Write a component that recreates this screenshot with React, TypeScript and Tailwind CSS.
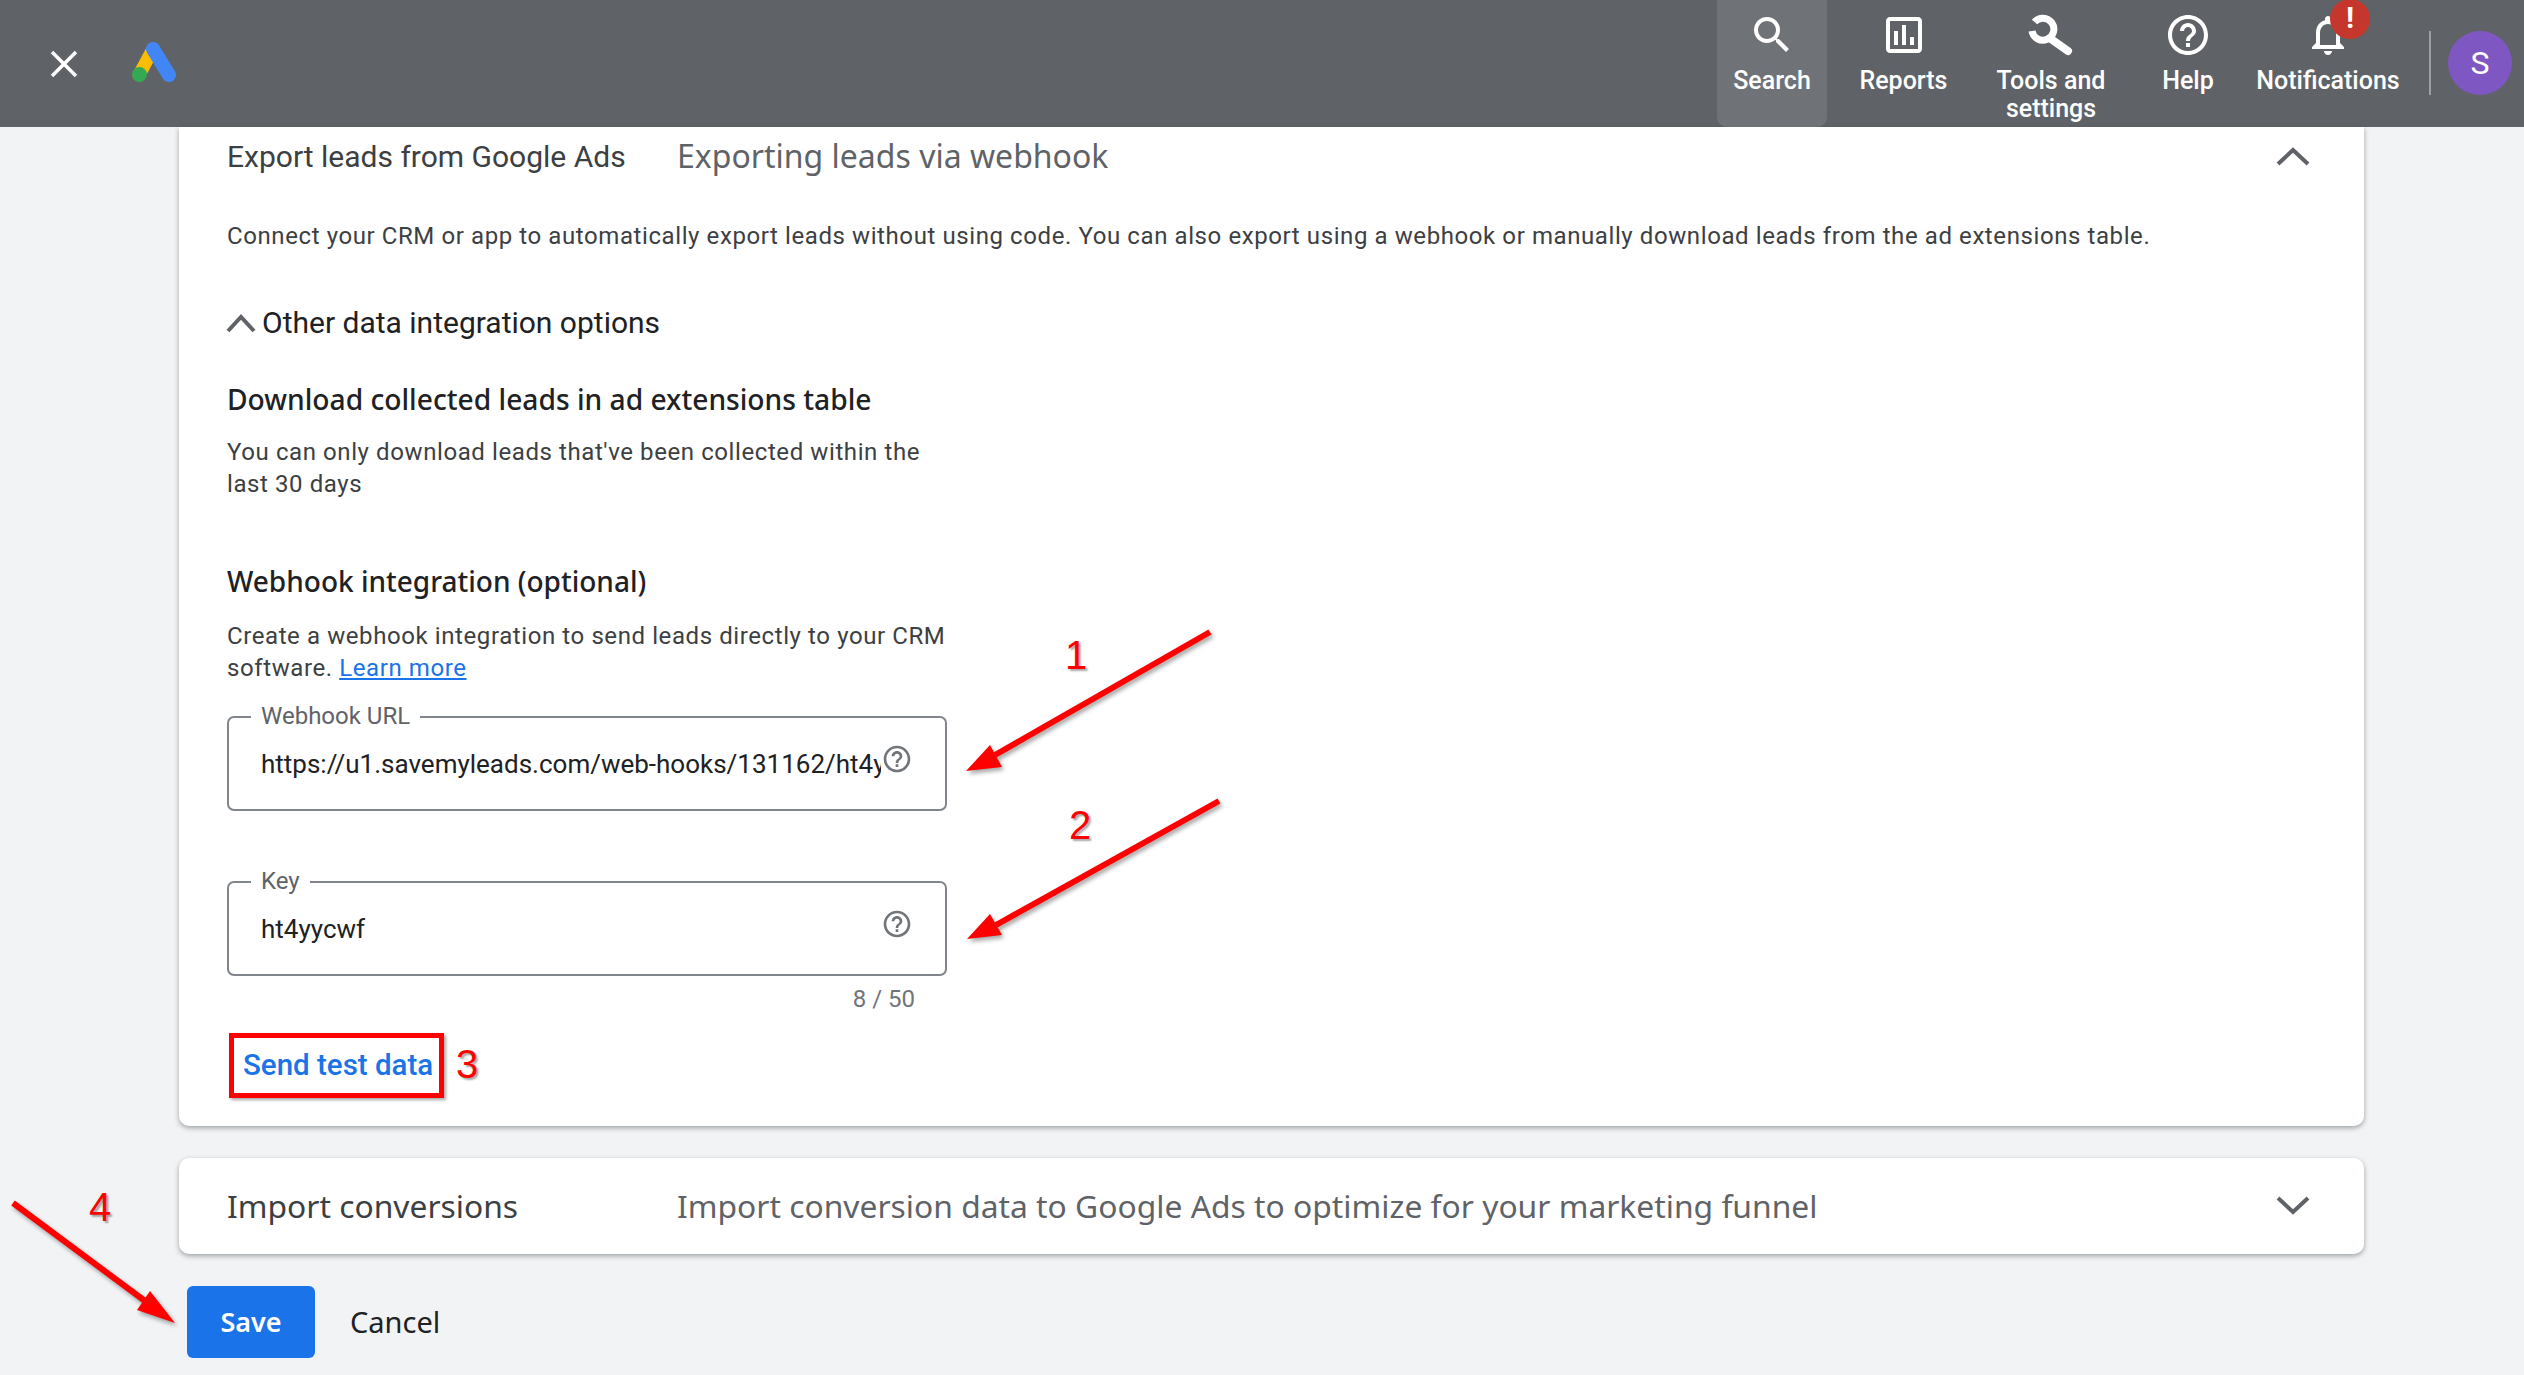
const ROBOTO = "font-[Roboto,sans-serif]";

function Ic({ d, cls }: { d: string; cls: string }) {
  return (
    <svg viewBox="0 0 24 24" className={cls} fill="currentColor">
      <path d={d} />
    </svg>
  );
}

const SEARCH = "M15.5 14h-.79l-.28-.27C15.41 12.59 16 11.11 16 9.5 16 5.91 13.09 3 9.5 3S3 5.91 3 9.5 5.91 16 9.5 16c1.61 0 3.09-.59 4.23-1.57l.27.28v.79l5 4.99L20.49 19l-4.99-5zm-6 0C7.01 14 5 11.99 5 9.5S7.01 5 9.5 5 14 7.01 14 9.5 11.99 14 9.5 14z";
const REPORT = "M19 3H5c-1.1 0-2 .9-2 2v14c0 1.1.9 2 2 2h14c1.1 0 2-.9 2-2V5c0-1.1-.9-2-2-2zm0 16H5V5h14v14zM7 10h2v7H7zm4-3h2v10h-2zm4 6h2v4h-2z";
const HELP = "M11 18h2v-2h-2v2zm1-16C6.48 2 2 6.48 2 12s4.48 10 10 10 10-4.48 10-10S17.52 2 12 2zm0 18c-4.41 0-8-3.59-8-8s3.59-8 8-8 8 3.59 8 8-3.59 8-8 8zm0-14c-2.21 0-4 1.79-4 4h2c0-1.1.9-2 2-2s2 .9 2 2c0 2-3 1.75-3 5h2c0-2.25 3-2.5 3-5 0-2.21-1.79-4-4-4z";
const BELL = "M12 22c1.1 0 2-.9 2-2h-4c0 1.1.9 2 2 2zm6-6v-5c0-3.07-1.63-5.64-4.5-6.32V4c0-.83-.67-1.5-1.5-1.5s-1.5.67-1.5 1.5v.68C7.64 5.36 6 7.92 6 11v5l-2 2v1h16v-1l-2-2zm-2 1H8v-6c0-2.48 1.51-4.5 4-4.5s4 2.02 4 4.5v6z";

function NavItem({ icon, label, w, active, children }: { icon: React.ReactNode; label: React.ReactNode; w: string; active?: boolean; children?: React.ReactNode }) {
  return (
    <div className={`relative flex flex-col items-center h-[127px] pt-[11px] rounded-b-[10px] ${w} ${active ? "bg-[#6f7378]" : ""}`}>
      {icon}
      <div className="text-white text-[25px] leading-[28px] font-medium text-center mt-[8px] whitespace-nowrap">{label}</div>
      {children}
    </div>
  );
}

function Field({ label, value }: { label: string; value: string }) {
  return (
    <div className="relative w-[720px] h-[95px] border-2 border-[#80868b] rounded-[7px] pl-[32px] pt-[30px]">
      <div className="absolute -top-[15px] left-[22px] bg-white px-[10px] text-[24px] leading-[26px] text-[#5f6368]">{label}</div>
      <div className="overflow-hidden whitespace-nowrap w-[620px] text-[26px] leading-[32px] text-[#202124]">{value}</div>
      <Ic d={HELP} cls="absolute right-[32px] top-[25px] w-[32px] h-[32px] text-[#70757a]" />
    </div>
  );
}

const Num = ({ n, cls }: { n: string; cls: string }) => (
  <div className={`absolute text-[40px] leading-[40px] text-[#ff0000] font-['Liberation_Sans',sans-serif] [text-shadow:2px_2px_2px_rgba(0,0,0,0.35)] ${cls}`}>{n}</div>
);

const BODY = "text-[24px] leading-[32px] tracking-[0.59px] text-[#3c4043]";
const GSANS = "font-['Noto_Sans',sans-serif]";

export default function App() {
  return (
    <div className={`relative w-[2524px] h-[1375px] overflow-hidden bg-[#f1f3f4] ${ROBOTO}`}>
      <header className="flex items-start h-[127px] bg-[#5f6368]">
        <div className="flex items-center h-[127px] pl-[48px]">
          <svg viewBox="0 0 24 24" className="w-[32px] h-[32px]" fill="none" stroke="#fff" strokeWidth="2.6">
            <path d="M3 3l18 18M21 3L3 21" />
          </svg>
          <svg viewBox="0 0 44 40" className="w-[44px] h-[40px] ml-[52px] -mt-[3px]">
            <path d="M21 7 L7 33" stroke="#fbbc04" strokeWidth="13" strokeLinecap="round" fill="none" />
            <path d="M21 7 L37 33" stroke="#4285f4" strokeWidth="14" strokeLinecap="round" fill="none" />
            <circle cx="7.5" cy="32.5" r="7.5" fill="#34a853" />
          </svg>
        </div>
        <div className="ml-auto flex items-start">
          <NavItem icon={<Ic d={SEARCH} cls="w-[48px] h-[48px] text-white" />} label="Search" w="w-[110px]" active />
          <NavItem icon={<Ic d={REPORT} cls="w-[48px] h-[48px] text-white" />} label="Reports" w="w-[143px] ml-[5px]" />
          <NavItem
            icon={
              <svg viewBox="2027 11 48 48" className="w-[48px] h-[48px]" fill="none" stroke="#fff">
                <path d="M2034.5 22A11 11 0 1 1 2032 31" strokeWidth="7" />
                <path d="M2051 39L2068 51" strokeWidth="8" strokeLinecap="round" />
              </svg>
            }
            label={<>Tools and<br />settings</>}
            w="w-[152px]"
          />
          <NavItem icon={<Ic d={HELP} cls="w-[48px] h-[48px] text-white" />} label="Help" w="w-[122px]" />
          <NavItem icon={<Ic d={BELL} cls="w-[48px] h-[48px] text-white" />} label="Notifications" w="w-[158px]">
            <div className="absolute left-[81px] -top-[1px] w-[40px] h-[40px] rounded-full bg-[#c5372c] text-white text-[30px] leading-[38px] text-center font-bold">!</div>
          </NavItem>
          <div className="w-[2px] h-[64px] bg-[#9aa0a6] mt-[31px] ml-[22px]" />
          <div className="w-[64px] h-[64px] rounded-full bg-[#7e57c2] text-white text-[32px] leading-[64px] text-center mt-[31px] ml-[17px] mr-[12px]">S</div>
        </div>
      </header>

      <main className="ml-[179px] w-[2185px]">
        <section className="h-[999px] bg-white rounded-b-[10px] shadow-[0_2px_5px_rgba(60,64,67,0.45)] px-[48px]">
          <div className="flex items-center justify-between h-[58px]">
            <div className="flex items-center">
              <div className="w-[398px] shrink-0 text-[30px] text-[#3c4043] whitespace-nowrap">Export leads from Google Ads</div>
              <div className={`ml-[52px] text-[32px] text-[#5f6368] ${GSANS} whitespace-nowrap`}>Exporting leads via webhook</div>
            </div>
            <svg viewBox="0 0 34 20" className="w-[34px] h-[20px] mr-[6px]" fill="none" stroke="#5f6368" strokeWidth="4"><path d="M2 18L17 4l15 14" /></svg>
          </div>
          <p className={`mt-[35px] ${BODY} whitespace-nowrap`}>Connect your CRM or app to automatically export leads without using code. You can also export using a webhook or manually download leads from the ad extensions table.</p>
          <div className="flex items-center mt-[51px]">
            <svg viewBox="0 0 30 20" className="w-[30px] h-[20px] -ml-[1px]" fill="none" stroke="#5f6368" strokeWidth="4"><path d="M2 18L15 4l13 14" /></svg>
            <span className="ml-[6px] text-[30px] leading-[40px] text-[#202124]">Other data integration options</span>
          </div>
          <h3 className={`mt-[36px] text-[28.2px] leading-[40px] font-medium text-[#202124] ${GSANS}`}>Download collected leads in ad extensions table</h3>
          <p className={`mt-[17px] w-[722px] ${BODY}`}>You can only download leads that've been collected within the last 30 days</p>
          <h3 className={`mt-[61px] text-[28px] leading-[40px] font-medium text-[#202124] ${GSANS}`}>Webhook integration (optional)</h3>
          <p className={`mt-[19px] w-[722px] ${BODY}`}>Create a webhook integration to send leads directly to your CRM software. <a className="text-[#1a73e8] underline">Learn more</a></p>
          <div className="mt-[32px]">
            <Field label="Webhook URL" value="https://u1.savemyleads.com/web-hooks/131162/ht4yycwf" />
          </div>
          <div className="mt-[70px]">
            <Field label="Key" value="ht4yycwf" />
          </div>
          <div className="w-[688px] mt-[10px] text-right text-[24px] leading-[26px] text-[#70757a]">8 / 50</div>
          <div className="relative mt-[21px] ml-[2px] w-[215px] h-[65px] border-[5px] border-[#ff0000] shadow-[2px_2px_3px_rgba(0,0,0,0.35)] flex items-center pl-[9px]">
            <span className="text-[29.5px] font-medium text-[#1a73e8] whitespace-nowrap">Send test data</span>
          </div>
        </section>

        <section className="mt-[32px] h-[96px] bg-white rounded-[10px] shadow-[0_2px_5px_rgba(60,64,67,0.45)] px-[48px] flex items-center">
          <div className={`w-[450px] shrink-0 text-[31.8px] text-[#3c4043] ${GSANS} whitespace-nowrap`}>Import conversions</div>
          <div className={`flex-1 text-[31.8px] text-[#5f6368] ${GSANS} whitespace-nowrap`}>Import conversion data to Google Ads to optimize for your marketing funnel</div>
          <svg viewBox="0 0 34 20" className="w-[34px] h-[20px] mr-[6px]" fill="none" stroke="#5f6368" strokeWidth="4"><path d="M2 2l15 14L32 2" /></svg>
        </section>

        <div className="mt-[32px] ml-[8px] flex items-center">
          <button className={`w-[128px] h-[72px] rounded-[6px] bg-[#1a73e8] text-white text-[27px] font-semibold ${GSANS}`}>Save</button>
          <span className={`ml-[35px] text-[29px] text-[#202124] ${GSANS}`}>Cancel</span>
        </div>
      </main>

      <svg className="absolute left-0 top-0 w-[2524px] h-[1375px] pointer-events-none drop-shadow-[2px_3px_2px_rgba(0,0,0,0.35)]" viewBox="0 0 2524 1375" fill="#ff0000" stroke="#ff0000" strokeWidth="0">
        <path d="M1210 632L995 755" strokeWidth="6" />
        <path d="M966 771L990 745L1002 767Z" />
        <path d="M1219 801L996 925" strokeWidth="6" />
        <path d="M967 939L990 914L1002 935Z" />
        <path d="M13 1203L145 1301" strokeWidth="6" />
        <path d="M175 1323L150 1291L137 1310Z" />
      </svg>
      <Num n="1" cls="left-[1065px] top-[635px]" />
      <Num n="2" cls="left-[1069px] top-[805px]" />
      <Num n="3" cls="left-[456px] top-[1044px]" />
      <Num n="4" cls="left-[89px] top-[1187px]" />
    </div>
  );
}
